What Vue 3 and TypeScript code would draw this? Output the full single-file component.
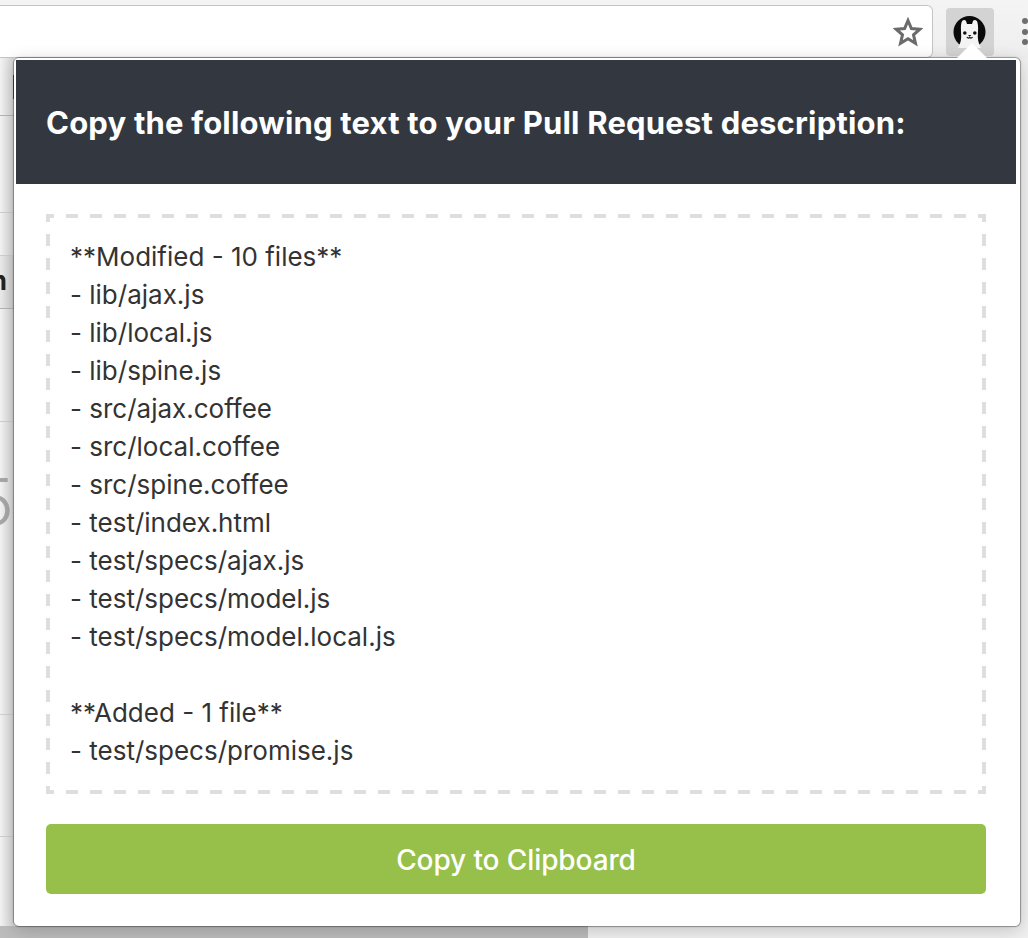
<script setup lang="ts">
const lines: string[] = [
  '**Modified - 10 files**',
  '- lib/ajax.js',
  '- lib/local.js',
  '- lib/spine.js',
  '- src/ajax.coffee',
  '- src/local.coffee',
  '- src/spine.coffee',
  '- test/index.html',
  '- test/specs/ajax.js',
  '- test/specs/model.js',
  '- test/specs/model.local.js',
  '',
  '**Added - 1 file**',
  '- test/specs/promise.js',
]
</script>

<template>
  <div class="page">
    <header class="toolbar">
      <div class="address">
        <svg class="star" width="30" height="30" viewBox="0 0 30 30">
          <path d="M15 3.500l3.400 8 8.600.7-6.500 5.700 2 8.400-7.500-4.500-7.500 4.500 2-8.400L3 12.200l8.600-.7z" fill="none" stroke="#6b6b6b" stroke-width="3" stroke-linejoin="miter" />
        </svg>
      </div>
      <div class="ext">
        <svg width="36" height="36" viewBox="0 0 36 36">
          <circle cx="17.500" cy="18" r="16" fill="#0a0a0a" />
          <path d="M6 34c1.500-3 3-6 3.200-11 .1-3-.4-6-.3-9 0-3 .5-6 1.300-7 1-1.200 3-1.200 3.800 0l1 3h5l1-3c.8-1.200 2.800-1.200 3.800 0 .8 1 1.300 4 1.300 7 .1 3-.4 6-.3 9 .2 5 1.700 8 3.200 11z" fill="#f4f4f4" />
          <circle cx="12.800" cy="19" r="1.800" fill="#111" />
          <circle cx="22.800" cy="19" r="1.800" fill="#111" />
          <path d="M16 21h3.400l-1.700 1.800z" fill="#111" />
          <path d="M14.800 23.200q1.500 1.600 2.900.3 1.400 1.300 2.900-.3" fill="none" stroke="#111" stroke-width="1.200" />
        </svg>
      </div>
      <div class="menu"><i></i><i></i><i></i></div>
    </header>

    <div class="backdrop">
      <div class="strip s1"><span class="tick"></span></div>
      <div class="strip s2"></div>
      <div class="strip s3"></div>
      <div class="strip s4"><span class="n">n</span></div>
      <div class="strip s5"></div>
      <div class="strip s6"><span class="five">5</span></div>
      <div class="strip s7"></div>
      <div class="strip s8"></div>
    </div>

    <div class="foot"></div>

    <section class="popup">
      <span class="arrow"></span>
      <h1 class="title">Copy the following text to your Pull Request description:</h1>
      <div class="content">
        <pre class="files"><template v-for="(l, i) in lines" :key="i">{{ l }}{{ '\n' }}</template></pre>
        <button class="copy">Copy to Clipboard</button>
      </div>
    </section>
  </div>
</template>

<style>
html, body { margin: 0; background: #fff; }
</style>

<style scoped>
.page {
  position: relative;
  width: 1028px;
  height: 938px;
  overflow: hidden;
  display: flex;
  flex-direction: column;
  background: #f0f0f0;
  font-family: Inter, Roboto, "Liberation Sans", sans-serif;
}
.toolbar {
  height: 58px;
  flex: none;
  box-sizing: border-box;
  padding: 5px 0 0;
  display: flex;
  align-items: flex-start;
  background: linear-gradient(#f4f4f4, #eeeeee);
}
.address {
  width: 933px;
  height: 53px;
  flex: none;
  box-sizing: border-box;
  display: flex;
  align-items: center;
  justify-content: flex-end;
  padding-right: 9px;
  background: #fff;
  border: 1px solid #c4c4c4;
  border-left: none;
  border-radius: 0 6px 6px 0;
}
.star { display: block; }
.ext {
  width: 48px;
  height: 48px;
  flex: none;
  margin: 3px 0 0 13px;
  border-radius: 4px;
  background: #d3d3d3;
  display: flex;
  align-items: center;
  justify-content: center;
}
.menu {
  display: flex;
  flex-direction: column;
  flex: none;
  gap: 4.500px;
  margin: 13px 0 0 28px;
}
.menu i {
  display: block;
  width: 6px;
  height: 6px;
  border-radius: 50%;
  background: #6e6e6e;
}
.backdrop { flex: 1; display: flex; flex-direction: column; }
.strip {
  width: 14px;
  box-sizing: border-box;
  border-bottom: 1px solid #cfcfcf;
  background: linear-gradient(90deg, #f4f4f4, #d4d4d4);
  position: relative;
  overflow: hidden;
}
.s1 { height: 58px; border-bottom-color: #b5b5b5; }
.s2 { height: 97px; }
.s3 { height: 43px; }
.s4 { height: 53px; border-bottom-color: #b5b5b5; background: linear-gradient(90deg, #ececec, #cccccc); }
.s5 { height: 113px; }
.s6 { height: 293px; }
.s7 { height: 122px; }
.s8 { height: 90px; border-bottom: none; }
.tick {
  position: absolute;
  right: 0;
  top: 17px;
  width: 1px;
  height: 24px;
  background: #555;
}
.n {
  position: absolute;
  right: 7px;
  top: 9px;
  font-size: 26px;
  line-height: 32px;
  font-weight: 700;
  color: #222;
}
.five {
  position: absolute;
  right: 0;
  top: 40px;
  font-size: 66px;
  line-height: 80px;
  font-weight: 300;
  color: #a8a8a8;
}
.foot {
  position: absolute;
  left: 0;
  bottom: 0;
  width: 588px;
  height: 12px;
  background: #bcbcbc;
}
.popup {
  position: absolute;
  left: 14px;
  top: 58px;
  width: 1006px;
  height: 868px;
  box-sizing: border-box;
  padding: 2px 4px 0 2px;
  background: #fff;
  border-radius: 5px;
  box-shadow: 0 0 1px 1px rgba(0, 0, 0, 0.35), 0 4px 18px rgba(0, 0, 0, 0.2);
}
.arrow {
  position: absolute;
  left: 943px;
  top: -15px;
  width: 0;
  height: 0;
  border-left: 15px solid transparent;
  border-right: 15px solid transparent;
  border-bottom: 15px solid #fff;
}
.title {
  margin: 0;
  height: 124px;
  box-sizing: border-box;
  padding-left: 30px;
  background: #333840;
  color: #fff;
  font-size: 31px;
  font-weight: 700;
  line-height: 126px;
  letter-spacing: 0.2px;
  white-space: nowrap;
}
.content {
  padding: 30px 30px 0;
  display: flex;
  flex-direction: column;
  gap: 30px;
}
.files {
  margin: 0;
  height: 580px;
  box-sizing: border-box;
  padding: 24px 24px 0;
  background:
    repeating-linear-gradient(90deg, #dedede 0 8px, transparent 8px 20px, #dedede 20px 24px) top / 100% 4px no-repeat,
    repeating-linear-gradient(90deg, #dedede 0 8px, transparent 8px 20px, #dedede 20px 24px) bottom / 100% 4px no-repeat,
    repeating-linear-gradient(180deg, #dedede 0 8px, transparent 8px 20px, #dedede 20px 24px) left / 4px 100% no-repeat,
    repeating-linear-gradient(180deg, #dedede 0 8px, transparent 8px 20px, #dedede 20px 24px) right / 4px 100% no-repeat;
  color: #333;
  font-family: inherit;
  font-size: 26px;
  line-height: 38px;
}
.copy {
  height: 70px;
  border: none;
  border-radius: 5px;
  background: #97c04a;
  color: #fff;
  font-family: inherit;
  font-size: 28px;
  font-weight: 500;
  letter-spacing: -0.1px;
  padding: 1px 0 0;
}
</style>
